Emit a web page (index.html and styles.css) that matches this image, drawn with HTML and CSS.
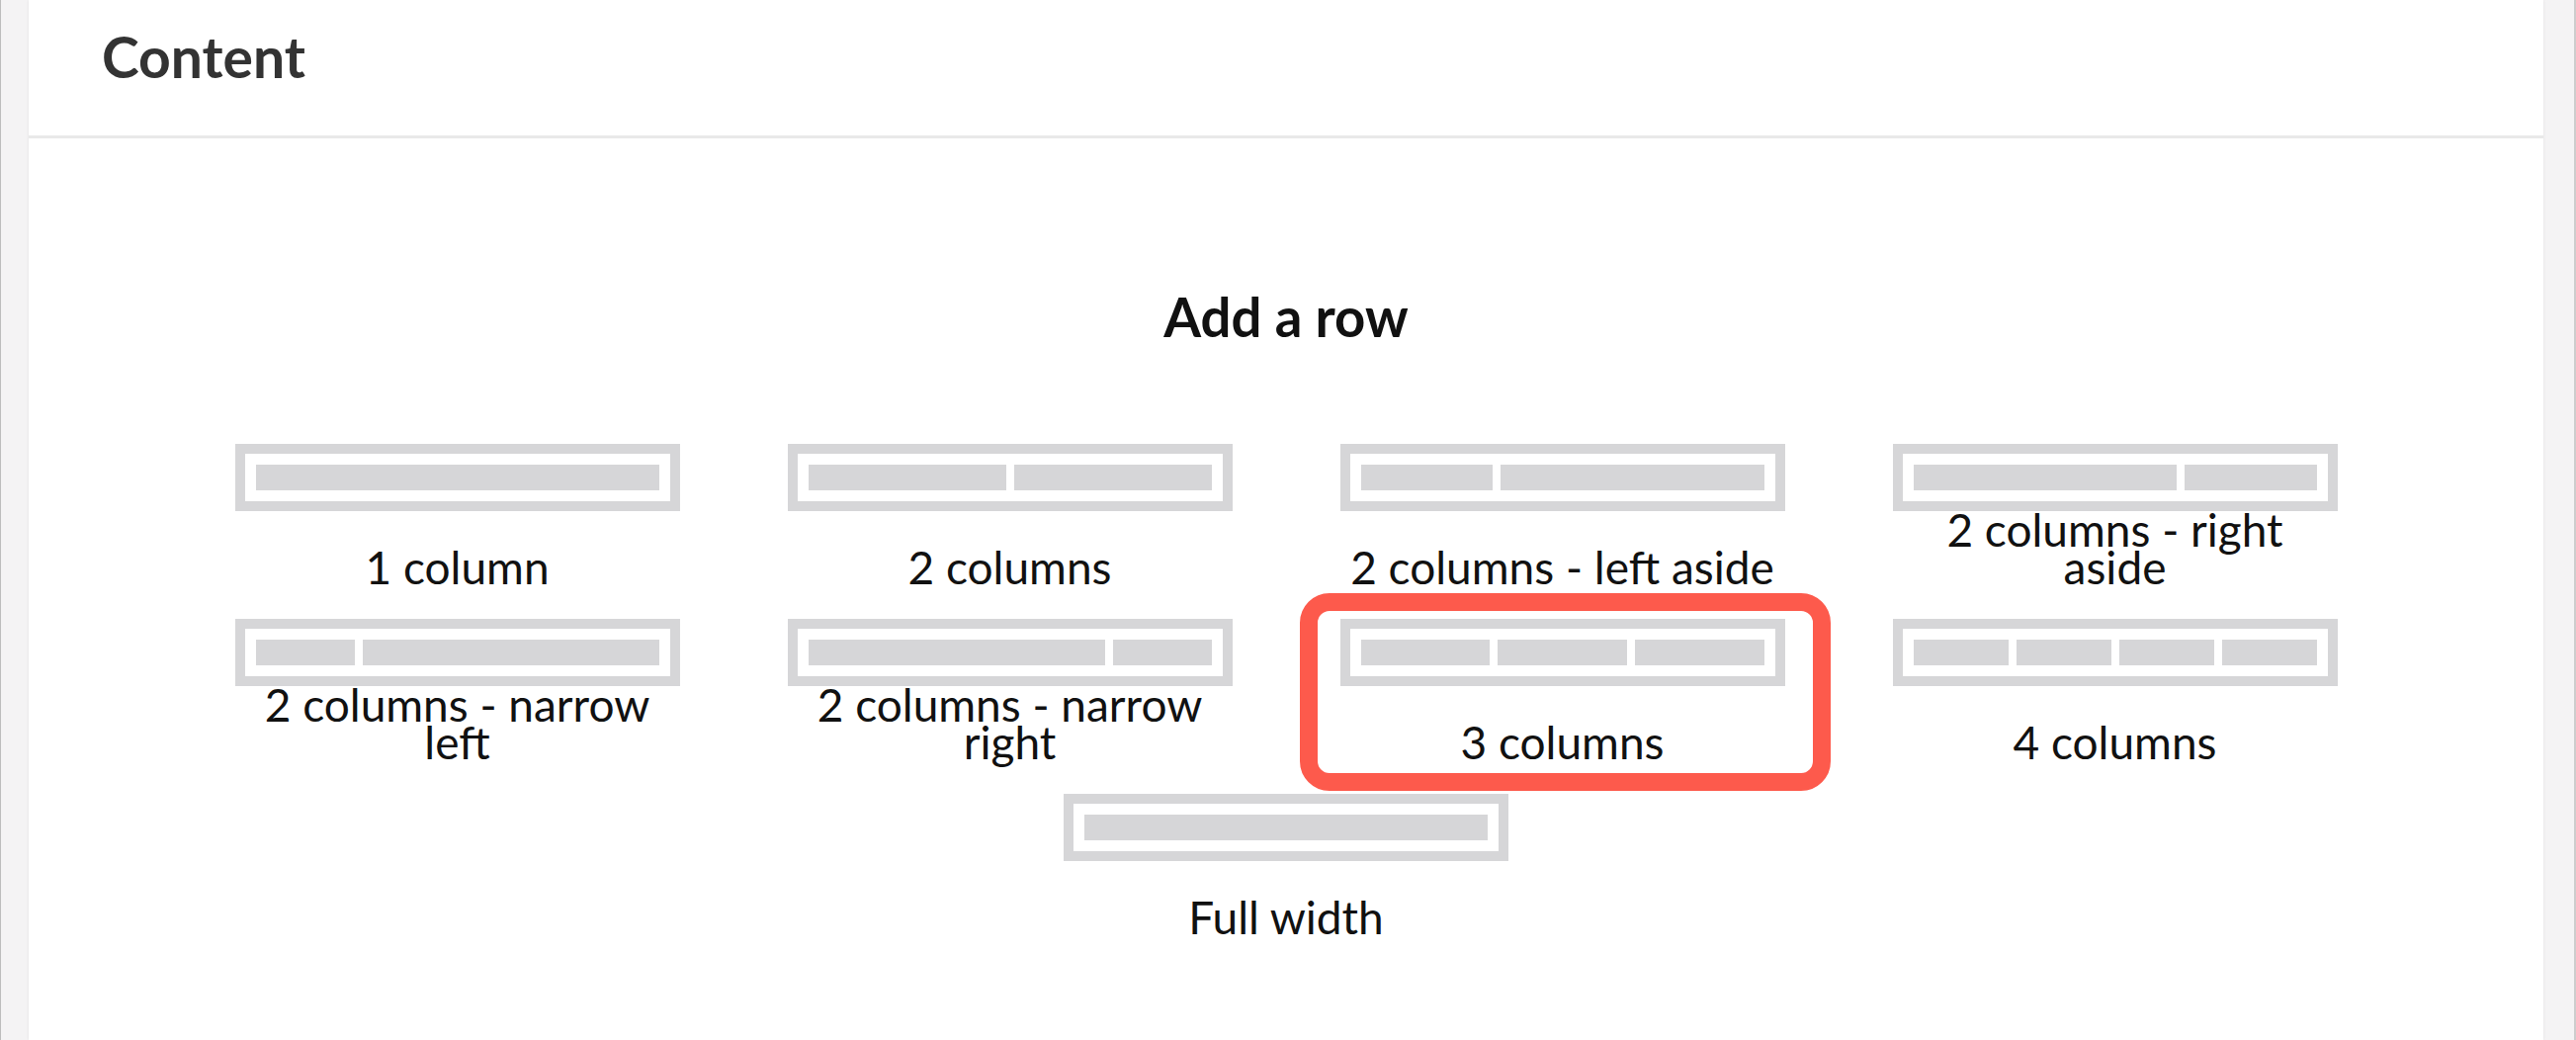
FILE: index.html
```html
<!DOCTYPE html>
<html lang="en">
	<head>
		<meta charset="UTF-8" />
		<meta name="viewport" content="width=device-width, initial-scale=1.0" />
		<title>Content</title>
		<link rel="stylesheet" href="styles.css">
	</head>
	<body>
		<div class="screen">
			<main class="panel">
				<!-- Заголовок панелі -->
				<header class="panel-header">
					<h1>Content</h1>
				</header>

				<!-- Вибір макета рядка -->
				<section class="row-picker">
					<h2>Add a row</h2>
					<div class="layouts">
						<a class="layout" href="#">
							<span class="layout-icon">
								<span class="col"></span>
							</span>
							<span class="layout-label">1 column</span>
						</a>
						<a class="layout" href="#">
							<span class="layout-icon">
								<span class="col"></span>
								<span class="col"></span>
							</span>
							<span class="layout-label">2 columns</span>
						</a>
						<a class="layout" href="#">
							<span class="layout-icon">
								<span class="col"></span>
								<span class="col col-2"></span>
							</span>
							<span class="layout-label">2 columns - left aside</span>
						</a>
						<a class="layout" href="#">
							<span class="layout-icon">
								<span class="col col-2"></span>
								<span class="col"></span>
							</span>
							<span class="layout-label">2 columns - right aside</span>
						</a>
						<a class="layout" href="#">
							<span class="layout-icon">
								<span class="col"></span>
								<span class="col col-3"></span>
							</span>
							<span class="layout-label">2 columns - narrow left</span>
						</a>
						<a class="layout" href="#">
							<span class="layout-icon">
								<span class="col col-3"></span>
								<span class="col"></span>
							</span>
							<span class="layout-label">2 columns - narrow right</span>
						</a>
						<a class="layout is-marked" href="#">
							<span class="layout-icon">
								<span class="col"></span>
								<span class="col"></span>
								<span class="col"></span>
							</span>
							<span class="layout-label">3 columns</span>
						</a>
						<a class="layout" href="#">
							<span class="layout-icon">
								<span class="col"></span>
								<span class="col"></span>
								<span class="col"></span>
								<span class="col"></span>
							</span>
							<span class="layout-label">4 columns</span>
						</a>
						<a class="layout" href="#">
							<span class="layout-icon">
								<span class="col"></span>
							</span>
							<span class="layout-label">Full width</span>
						</a>
					</div>
				</section>
			</main>
		</div>
	</body>
</html>
```

FILE: styles.css
```css
body {
	margin: 0;
	font-family: Lato, 'Open Sans', sans-serif;
	color: #111;
	overflow: hidden;
}
.screen {
	display: flex;
	height: 100vh;
	padding: 0 31px 0 28px;
	background-color: #f4f3f4;
	border-left: 1px solid #bdbdbd;
	border-right: 2px solid #cdcdcd;
}
.panel {
	flex: 1;
	background: white;
	box-shadow: 0 0 3px rgba(0, 0, 0, 0.08);
}
.panel-header {
	height: 140px;
	padding-left: 74px;
	box-sizing: border-box;
	padding-top: 29px;
	border-bottom: 3px solid #e9e9e9;
}
.panel-header h1 {
	margin: 0;
	font-size: 57px;
	line-height: 1;
	font-weight: 700;
	color: #333;
}
.row-picker h2 {
	margin: 153px 0 101px;
	font-size: 54.5px;
	line-height: 1;
	font-weight: 700;
	text-align: center;
}
.layouts {
	display: flex;
	flex-wrap: wrap;
	justify-content: center;
	row-gap: 33px;
	width: 2236px;
	margin: 0 auto;
}
.layout {
	position: relative;
	width: 559px;
	height: 144px;
	display: flex;
	flex-direction: column;
	align-items: center;
	color: #111;
	text-decoration: none;
}
.layout-icon {
	display: flex;
	gap: 8px;
	width: 450px;
	box-sizing: border-box;
	padding: 11px;
	border: 10px solid #d6d6d8;
}
.col {
	flex: 1;
	height: 26px;
	background: #d6d6d8;
}
.col-2 {
	flex: 2;
}
.col-3 {
	flex: 3;
}
.layout-label {
	margin-top: auto;
	width: 436px;
	font-size: 46px;
	line-height: 38px;
	text-align: center;
}
.is-marked::after {
	content: '';
	position: absolute;
	top: -26px;
	bottom: -30px;
	left: 14px;
	right: 8px;
	border: 18px solid #fd5a4c;
	border-radius: 30px;
}
```
